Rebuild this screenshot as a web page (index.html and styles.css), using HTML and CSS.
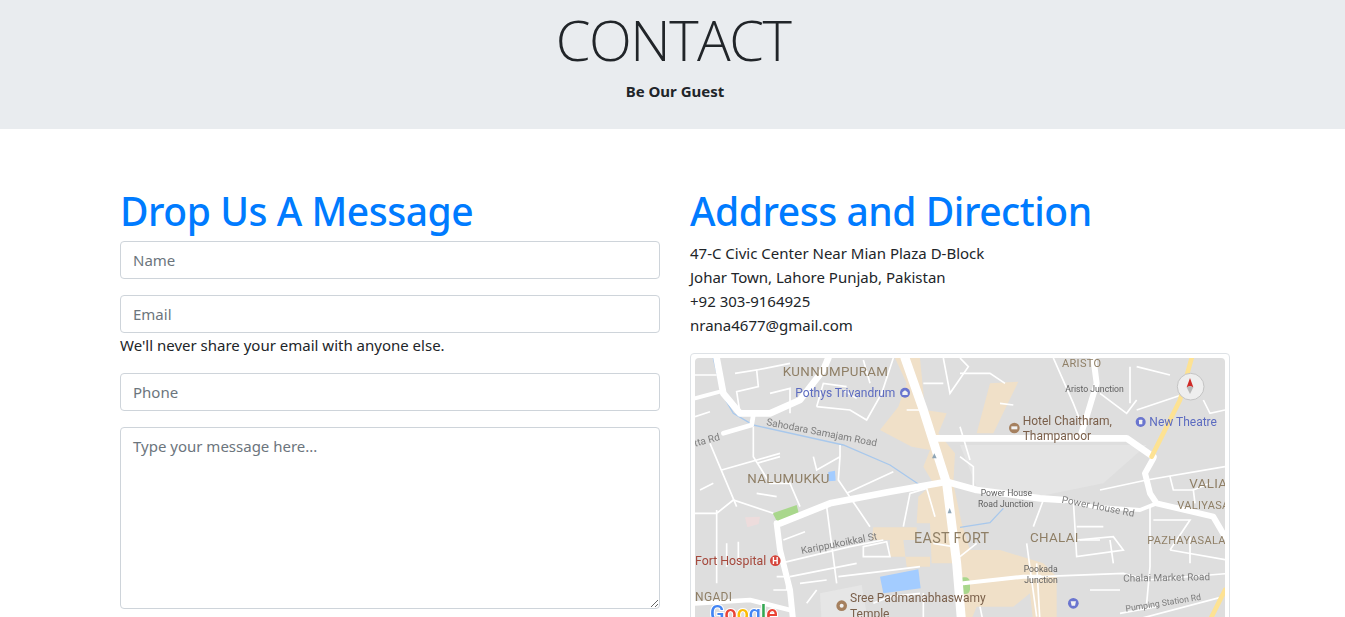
FILE: index.html
```html
<!DOCTYPE html>
<html lang="en">

<head>
    <meta charset="UTF-8">
    <meta name="viewport" content="width=device-width, initial-scale=1.0">
    <title>Contact</title>
    <link rel="stylesheet" href="styles.css">
</head>

<body>
    <div class="page">
        <header class="banner">
            <h1>CONTACT</h1>
            <p>Be Our Guest</p>
        </header>

        <main class="container">
            <section>
                <h2>Drop Us A Message</h2>
                <form>
                    <div class="field">
                        <input type="text" placeholder="Name">
                    </div>
                    <div class="field">
                        <input type="email" placeholder="Email">
                        <small>We'll never share your email with anyone else.</small>
                    </div>
                    <div class="field">
                        <input type="text" placeholder="Phone">
                    </div>
                    <div class="field">
                        <textarea placeholder="Type your message here..."></textarea>
                    </div>
                </form>
            </section>

            <section>
                <h2>Address and Direction</h2>
                <address>
                    47-C Civic Center Near Mian Plaza D-Block<br>
                    Johar Town, Lahore Punjab, Pakistan<br>
                    +92 303-9164925<br>
                    nrana4677@gmail.com
                </address>
                <div class="thumbnail">
                    <svg class="map" viewBox="15 24 1590 795" width="530" height="265">
                        <rect x="15" y="24" width="1590" height="795" fill="#dedede" />

                        <!-- built up areas -->
                        <path class="beige" d="M615 24H690L705 180L770 190L745 250L795 310L790 400L815 520L840 600H930L1060 640L1100 680V819H1030L1020 730L970 770H860L840 819H810L800 640L725 640L720 520L680 520L685 440L730 400L700 350L720 300L665 290L570 240L625 170L650 100Z" />
                        <path class="beige" d="M550 532H680V570H640L650 650H720V620H600V570H545Z" />
                        <path class="beige" d="M900 100L985 95L910 250H860Z" />

                        <!-- rail yard -->
                        <path class="yard" d="M810 285H1370L1240 400L1040 440L860 410Z" />

                        <!-- parks, water -->
                        <path class="temple" d="M390 730L515 705L535 819H395Z" />
                        <path class="water" d="M570 680L685 658L692 715L580 730Z" />
                        <path class="water" d="M415 366L435 362L437 392L415 394Z" />
                        <path class="green" d="M248 490L320 465L326 488L262 516Z" />
                        <rect class="green" x="808" y="682" width="32" height="50" rx="14" />
                        <path class="pink" d="M165 502L210 500L206 522L172 532Z" />

                        <path class="river" d="M70 24L95 130L130 190L190 225L460 285L600 345L685 402" />
                        <path class="river" d="M940 475L900 518L810 532" />

                        <!-- thin streets -->
                        <g class="street">
                            <path d="M15 75H80M135 70L200 60L205 110L140 125L150 190M200 60L300 40M240 130L300 115V190M380 170L400 100L470 110M380 170L480 180L530 210L575 130L610 24" />
                            <path d="M190 230V320L240 400L300 400L330 470M60 280L140 470M95 360L270 310M200 340L270 320M370 320L380 360L450 320V285M450 320L445 390L540 530M470 430L610 365" />
                            <path d="M15 490H80L130 450L250 490M80 480V700M110 580V650M145 575V640M280 570L345 545M410 470L440 700M270 640L480 590L580 570M300 680L500 640M330 700L410 690M260 680H290V720H250" />
                            <path d="M640 530L660 430L710 415L735 500M520 590L590 575L600 620H520ZM445 680L570 665L690 650M810 24L835 50L780 130L760 24M700 100H760M650 180H700M730 580L790 590" />
                            <path d="M1090 24L1150 160L1190 262M810 70H900L945 100M930 160L970 165M1040 640L1050 819M1010 580L1040 800M1150 450L1160 620L1300 600L1270 560L1160 570M1160 530H1240M1260 570L1270 640M1050 680L1300 670L1370 690L1620 670" />
                            <path d="M1230 420L1370 390L1605 350M1440 380L1450 420H1510L1560 400M1510 420L1515 460M1380 470V650L1370 760M1390 510H1500L1440 600M1440 600L1610 630M1290 790L1400 770M1300 819L1600 740M1230 130L1310 190L1340 150M1320 50V160M1340 50L1440 75M1340 180L1490 130M1540 150L1560 190L1605 180" />
                            <path d="M810 230L840 330M810 320L850 350V420M1060 450L1030 530M810 620L860 580M1170 570H1230" />
                            <path d="M15 200L60 185M30 420L70 400M520 30L540 100M460 120L500 145M200 430L260 440M350 760L380 720M550 760L600 740L690 730M700 730V819M1500 560V640M1200 720H1290M870 770L880 819" />
                        </g>

                        <!-- main roads -->
                        <g class="road">
                            <path class="w20" d="M80 24L100 130L150 190L240 190L330 150L400 60L415 24" />
                            <path class="w12" d="M15 145L90 125" />
                            <path class="w14" d="M100 250L185 225L190 195" />
                            <path class="w20" d="M270 520L420 460L600 425L770 395L860 420L1050 445L1120 450" />
                            <path class="w20" d="M730 265H840L1310 265L1390 320" />
                            <path class="w18" d="M260 520L270 600L300 720L310 819" />
                            <path class="w14" d="M15 760L180 750L300 780" />
                            <path class="w18" d="M1210 24L1220 100L1190 200L1170 262" />
                            <path class="w18" d="M1390 325L1365 370L1380 430L1400 460L1570 500L1605 560" />
                            <path class="w12" d="M1120 450L1210 470L1350 480L1400 460" />
                            <path class="w27" d="M645 24L700 180L770 400L800 640L815 819" />
                            <path class="w12" d="M820 700L1000 680L1050 680" />
                        </g>
                        <path class="yellow w14" d="M1505 24L1470 150L1385 320" />
                        <path class="yellow w14" d="M1605 720L1560 810" />
                        <path class="dark-arrow" d="M733 310L740 325H726Z" />
                        <path class="dark-arrow" d="M779 474L785 490H773Z" />

                        <!-- labels -->
                        <text class="area s40" x="278" y="78">KUNNUMPURAM</text>
                        <text class="area s40" x="172" y="398">NALUMUKKU</text>
                        <text class="area s43" x="672" y="578">EAST FORT</text>
                        <text class="area s40" x="1020" y="575">CHALAI</text>
                        <text class="area s33" x="1116" y="50">ARISTO</text>
                        <text class="area s40" x="1498" y="415">VALIA</text>
                        <text class="area s33" x="1462" y="478">VALIYASALA</text>
                        <text class="area s33" x="1372" y="581">PAZHAYASALA</text>
                        <text class="area s36" x="15" y="754">NGADI</text>

                        <text class="poi-blue" x="316" y="140">Pothys Trivandrum</text>
                        <circle class="pin-blue" cx="645" cy="128" r="15" />
                        <path class="pin-mark" d="M637 135V127L645 121L653 127V135Z" />
                        <text class="poi-blue" x="1378" y="228">New Theatre</text>
                        <circle class="pin-blue" cx="1352" cy="216" r="15" />
                        <rect class="pin-mark" x="1347" y="209" width="10" height="14" rx="2" />
                        <circle class="pin-blue" cx="1150" cy="760" r="16" />
                        <path class="pin-mark" d="M1142 754H1158L1155 767H1145Z" />

                        <text class="poi-brown" x="998" y="224">Hotel Chaithram,</text>
                        <text class="poi-brown" x="998" y="269">Thampanoor</text>
                        <circle class="pin-brown" cx="973" cy="234" r="16" />
                        <rect class="pin-mark" x="964" y="229" width="18" height="9" />
                        <text class="poi-brown" x="480" y="757">Sree Padmanabhaswamy</text>
                        <text class="poi-brown" x="480" y="803">Temple</text>
                        <circle class="pin-brown" cx="455" cy="767" r="16" />
                        <circle class="pin-mark" cx="455" cy="767" r="6" />

                        <text class="poi-red" x="15" y="644">Fort Hospital</text>
                        <circle class="pin-red" cx="256" cy="632" r="16" />
                        <text class="pin-letter" x="256" y="641">H</text>

                        <text class="street-name s30" transform="translate(228 225) rotate(11)">Sahodara Samajam Road</text>
                        <text class="street-name s30" transform="translate(15 290) rotate(-15)">tta Rd</text>
                        <text class="street-name s30" transform="translate(335 612) rotate(-11)">Karippukoikkal St</text>
                        <text class="street-name s30" transform="translate(1114 458) rotate(11)">Power House Rd</text>
                        <text class="street-name s30" transform="translate(1300 695) rotate(-1)">Chalai Market Road</text>
                        <text class="street-name s26" transform="translate(1308 785) rotate(-9)">Pumping Station Rd</text>
                        <text class="place s24" x="1126" y="126">Aristo Junction</text>
                        <text class="place s24" x="872" y="438">Power House</text>
                        <text class="place s24" x="864" y="470">Road Junction</text>
                        <text class="place s24" x="1001" y="666">Pookada</text>
                        <text class="place s24" x="1003" y="698">Junction</text>

                        <text class="google" x="60" y="812"><tspan fill="#4285f4">G</tspan><tspan fill="#ea4335">o</tspan><tspan fill="#fbbc05">o</tspan><tspan fill="#4285f4">g</tspan><tspan fill="#34a853">l</tspan><tspan fill="#ea4335">e</tspan></text>

                        <!-- compass -->
                        <circle cx="1502" cy="110" r="40" fill="#eeeeee" stroke="#c4c4c4" stroke-width="3" />
                        <path d="M1500 84L1490 112L1500 108L1510 112Z" fill="#cf2a27" />
                        <path d="M1490 112L1500 132L1510 112L1500 108Z" fill="#b9b9b9" />
                    </svg>
                </div>
            </section>
        </main>
    </div>
</body>

</html>
```

FILE: styles.css
```css
html,
body {
    margin: 0;
    height: 100%;
    overflow: hidden;
    background: #fff;
}

body {
    font-family: "Noto Sans", "Open Sans", sans-serif;
    font-size: 16px;
    line-height: 24px;
    color: #212529;
}

.page {
    width: 1350px;
}

.banner {
    background-color: #e9ecef;
    text-align: center;
    padding: 6px 0 26px;
}

.banner h1 {
    margin: 0 0 6px;
    padding-right: 4px;
    font-family: "Open Sans", sans-serif;
    font-size: 56px;
    line-height: 67px;
    font-weight: 300;
    letter-spacing: -1.5px;
}

.banner p {
    margin: 0;
    font-size: 15px;
    font-weight: 700;
}

.container {
    width: 1110px;
    margin: 0 auto;
    padding-top: 56px;
    display: grid;
    grid-template-columns: 540px 540px;
    gap: 30px;
}

h2 {
    margin: 0 0 8px;
    padding-top: 4px;
    font-size: 39px;
    line-height: 44px;
    font-weight: 500;
    color: #007bff;
    letter-spacing: -0.45px;
}

.field {
    margin-bottom: 16px;
}

input,
textarea {
    display: block;
    box-sizing: border-box;
    width: 100%;
    padding: 6px 12px;
    border: 1px solid #ced4da;
    border-radius: 4px;
    font-family: inherit;
    font-size: 15px;
    line-height: 24px;
    color: #495057;
    background: #fff;
}

input {
    height: 38px;
}

textarea {
    height: 182px;
}

input::placeholder,
textarea::placeholder {
    color: #6c757d;
    opacity: 1;
}

small {
    display: block;
    font-size: 15px;
    line-height: 24px;
}

address {
    font-style: normal;
    font-size: 15px;
    margin-bottom: 16px;
}

.thumbnail {
    padding: 4px;
    border: 1px solid #dee2e6;
    border-radius: 4px;
    background: #fff;
}

.map {
    display: block;
    border-radius: 4px;
    filter: blur(0.4px);
}

/* map fills */
.beige { fill: #f0e0c8; }
.yard { fill: #e4e4e4; }
.temple { fill: #e6e6e6; }
.water { fill: #a3ccff; }
.green { fill: #a9d78c; }
.pink { fill: #eddcdc; }

.river {
    fill: none;
    stroke: #a8c8ec;
    stroke-width: 4;
}

.street path {
    fill: none;
    stroke: #fff;
    stroke-width: 5;
}

.road path,
.yellow {
    fill: none;
    stroke: #fff;
    stroke-linecap: round;
    stroke-linejoin: round;
}

.road path.w12 { stroke-width: 12; }
.road path.w14 { stroke-width: 14; }
.road path.w18 { stroke-width: 18; }
.road path.w20 { stroke-width: 20; }
.road path.w27 { stroke-width: 27; }

.yellow {
    stroke: #fde293;
    stroke-width: 14;
}

.dark-arrow { fill: #8fa5b5; }

/* map labels */
.map text {
    font-family: Roboto, sans-serif;
    paint-order: stroke;
    stroke: #fff;
    stroke-width: 0;
}

.map .area {
    fill: #8f7f66;
    letter-spacing: 1px;
}

.map .s43 { font-size: 43px; }
.map .s40 { font-size: 40px; }
.map .s36 { font-size: 36px; }
.map .s33 { font-size: 33px; }
.map .s30 { font-size: 30px; }
.map .s26 { font-size: 26px; }
.map .s24 { font-size: 26px; }

.map .poi-blue {
    fill: #5c6bc0;
    font-size: 36px;
}

.map .poi-brown {
    fill: #7a5f4a;
    font-size: 36px;
}

.map .poi-red {
    fill: #a5483c;
    font-size: 37px;
}

.map .street-name { fill: #7d7d7d; }
.map .place { fill: #5f5f5f; }

.pin-blue { fill: #6a75cf; }
.pin-brown { fill: #a5805f; }
.pin-red { fill: #d5453b; }
.pin-mark { fill: #f2f2f2; }

.map .pin-letter {
    fill: #fff;
    font-size: 26px;
    font-weight: 700;
    text-anchor: middle;
}

.map .google {
    font-size: 64px;
    font-weight: 500;
    stroke: #fff;
    stroke-width: 6px;
}
```
